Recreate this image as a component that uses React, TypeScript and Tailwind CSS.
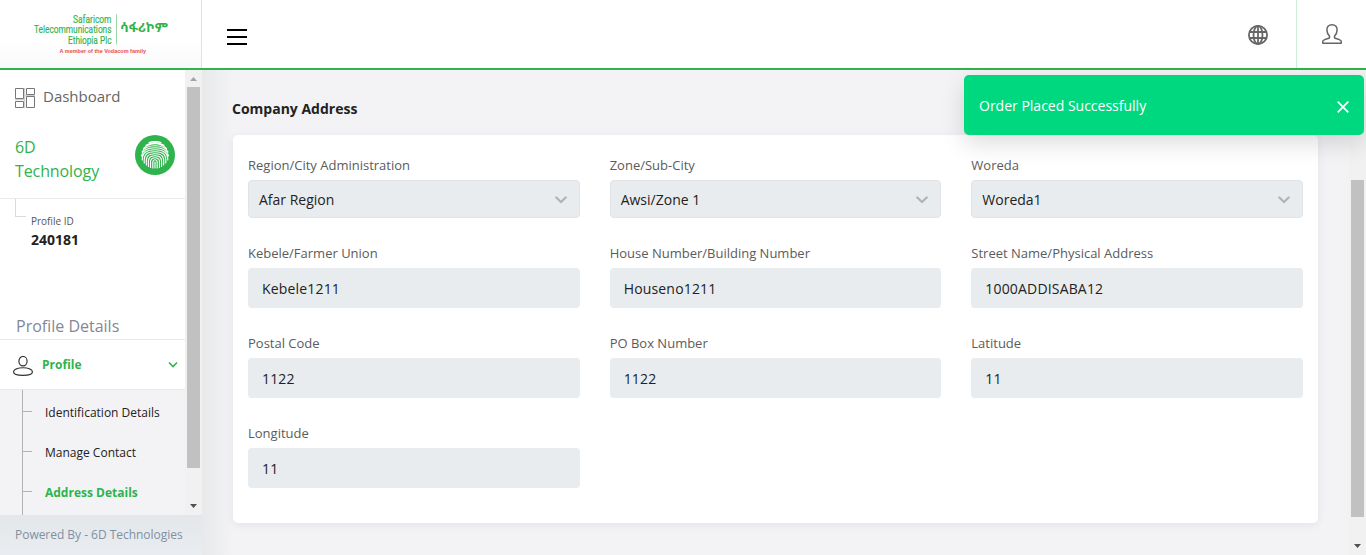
import React from "react";

type FieldProps = { label: string; value: string; select?: boolean };

const fields: FieldProps[] = [
  { label: "Region/City Administration", value: "Afar Region", select: true },
  { label: "Zone/Sub-City", value: "Awsi/Zone 1", select: true },
  { label: "Woreda", value: "Woreda1", select: true },
  { label: "Kebele/Farmer Union", value: "Kebele1211" },
  { label: "House Number/Building Number", value: "Houseno1211" },
  { label: "Street Name/Physical Address", value: "1000ADDISABA12" },
  { label: "Postal Code", value: "1122" },
  { label: "PO Box Number", value: "1122" },
  { label: "Latitude", value: "11" },
  { label: "Longitude", value: "11" },
];

function Logo() {
  return (
    <svg width="140" height="46" viewBox="0 0 140 46" className="ml-[32px] mt-[11px] block">
      <g fill="#2fb34c" fontFamily="Roboto" fontSize="10.500" fontWeight="400" stroke="#2fb34c" strokeWidth=".15">
        <text x="41" y="11.500" textLength="38.500" lengthAdjust="spacingAndGlyphs">Safaricom</text>
        <text x="2" y="22" textLength="77.500" lengthAdjust="spacingAndGlyphs">Telecommunications</text>
        <text x="36" y="32.500" textLength="43.500" lengthAdjust="spacingAndGlyphs">Ethiopia Plc</text>
      </g>
      <path d="M84.500 3V33.500" stroke="#9bd9a8" />
      <text x="88" y="20.500" fill="#2fb34c" fontFamily="'Noto Sans Ethiopic', 'Noto Sans', 'DejaVu Sans', sans-serif" fontSize="13" fontWeight="700" textLength="48" lengthAdjust="spacingAndGlyphs">ሳፋሪኮም</text>
      <text x="27.500" y="42" fill="#e94b50" fontFamily="'Liberation Sans'" fontSize="5.500" fontWeight="700" textLength="86.500">A member of the Vodacom family</text>
    </svg>
  );
}

function Header() {
  return (
    <header className="flex h-[70px] shrink-0 border-b-2 border-[#2fb34c] bg-white">
      <div className="w-[202px] border-r border-[#cfeed6] bg-linear-to-b from-white from-60% to-[#f9f9fa]">
        <Logo />
      </div>
      <div className="flex flex-1 items-start pl-[25px] pt-[29px]">
        <div className="flex w-5 flex-col gap-[5px]">
          <span className="h-[2px] bg-black" />
          <span className="h-[2px] bg-black" />
          <span className="h-[2px] bg-black" />
        </div>
      </div>
      <div className="w-12 pt-[25px]">
        <svg width="20" height="20" viewBox="0 0 20 20" fill="none" stroke="#666" strokeWidth="1.800" className="block">
          <circle cx="10" cy="10" r="9.100" />
          <ellipse cx="10" cy="10" rx="4.500" ry="9.100" />
          <path d="M10 1v18M2 7h16M2 13h16" />
        </svg>
      </div>
      <div className="w-[70px] border-l border-[#cfeed6] pl-[25px] pt-[24px]">
        <svg width="20" height="20" viewBox="0 0 20 20" fill="none" stroke="#666" strokeWidth="1.500" strokeLinejoin="round" className="block">
          <path d="M10 .8C6.500.8 4.700 3 4.900 6.100c.1 2.500 1.100 4.600 2.600 6v1.700C6.500 14.600.8 15.600.8 17.300v1.900h18.400v-1.900c0-1.700-5.700-2.700-6.700-3.500v-1.700c1.500-1.400 2.500-3.500 2.600-6C15.300 3 13.500.8 10 .8Z" />
        </svg>
      </div>
    </header>
  );
}

function Fingerprint() {
  return (
    <div className="flex size-10 items-center justify-center rounded-full bg-[#2fb34c]">
      <svg width="28" height="28" viewBox="0 0 28 28" fill="none" stroke="#fff" strokeWidth="1.150" strokeLinecap="round">
        <path d="M8 1.500Q14-.8 20 1.500M5 4.200Q14-1 23 4.200M2.600 7.500Q7 2.700 14 2.700T25.400 7.500M1 11Q4 4.700 14 4.700T27 11M.5 15Q2 6.700 14 6.700T27.500 15M1.200 19Q1 8.700 14 8.700T26.800 19M3.300 22C2.500 14 5 10.700 14 10.700S25.500 14 24.700 22M5.400 24C4.800 16 6 12.700 14 12.700S23.200 16 22.600 24M7.500 25.500C7 19 7 14.700 14 14.700S21 19 20.500 25.500M9.600 26.500C9.500 21 8.500 16.700 14 16.700S18.500 21 18.400 26.500M11.800 27C12 22 11 18.700 14 18.700S16 22 16.200 27M14 21v6" />
      </svg>
    </div>
  );
}

function Sidebar() {
  return (
    <aside className="flex w-[202px] shrink-0 flex-col">
      <div className="flex h-[445px]">
        <div className="flex w-[185px] flex-col bg-white">
          <div className="flex h-[55px] items-start pl-[15px] text-[#666]">
            <svg width="20" height="20" viewBox="0 0 20 20" fill="none" className="mt-[18px] block">
              <path d="M9.500 0v20M0 11.500h10M10 7.500h10" stroke="#cfcfcf" strokeWidth="1.500" />
              <path d="M.5.500h8v10h-8zM11.500.500h8v6h-8zM.5 13.500h8v6h-8zM11.500 8.500h8v11h-8z" stroke="#777" />
            </svg>
            <span className="ml-2 mt-[14px] text-[15px] leading-6">Dashboard</span>
          </div>
          <div className="flex h-[74px] shrink-0 justify-between border-b border-[#e8e9ec] pl-[15px] pr-[10px] pt-[10px]">
            <div className="w-[90px] text-base leading-6 tracking-[-0.1px] text-[#2fb34c]">6D Technology</div>
            <Fingerprint />
          </div>
          <div className="flex h-[115px] shrink-0 pl-[15px]">
            <div className="h-[18px] w-[11px] border-b border-l border-[#d9dadc]" />
            <div className="pl-[5px] pt-[14px]">
              <div className="text-[10px] leading-4 text-[#555]">Profile ID</div>
              <div className="mt-px text-sm leading-5 font-bold text-[#222]">240181</div>
            </div>
          </div>
          <div className="h-[26px] shrink-0 border-b border-[#e8e9ec] pl-4 text-base leading-6 text-[#858795]">Profile Details</div>
          <div className="flex h-[50px] shrink-0 items-center border-b border-[#e8e9ec] pl-[13px] pr-[7px]">
            <svg width="20" height="20" viewBox="0 0 20 20" fill="none" stroke="#333" strokeWidth="1.200" className="mt-[3px]">
              <ellipse cx="10" cy="5.200" rx="4.100" ry="4.700" />
              <path d="M6.200 12C3.100 12.700.6 14 .6 16c0 2.200 4 3.400 9.400 3.400s9.400-1.200 9.400-3.400c0-2-2.500-3.300-5.600-4-1.200-.3-6.400-.3-7.600 0Z" />
            </svg>
            <span className="ml-[9px] flex-1 text-xs font-bold text-[#2fb34c]">Profile</span>
            <svg width="10" height="8" viewBox="0 0 10 8" fill="none" stroke="#2fb34c" strokeWidth="1.600">
              <path d="M1 1.500l4 4 4-4" />
            </svg>
          </div>
          <div className="flex flex-1 bg-[#f3f3f6] pl-[22px]">
            <ul className="flex-1 border-l border-[#b2b2b4] pt-[2px]">
              {["Identification Details", "Manage Contact", "Address Details"].map((item) => (
                <li key={item} className="flex h-10 items-center">
                  <span className="-mt-px h-px w-[9px] bg-[#b2b2b4]" />
                  <span className={item === "Address Details" ? "ml-[13px] mt-[2px] text-xs font-bold text-[#2fb34c]" : "ml-[13px] mt-[2px] text-xs text-[#222]"}>{item}</span>
                </li>
              ))}
            </ul>
          </div>
        </div>
        <div className="flex w-[17px] flex-col items-center bg-[#f1f1f1]">
          <svg width="17" height="17" className="shrink-0"><path d="M5 11h7L8.500 7z" fill="#a3a3a3" /></svg>
          <div className="h-[381px] w-[13px] bg-[#c1c1c1]" />
          <svg width="17" height="17" className="mt-auto shrink-0"><path d="M5 6h7L8.500 10z" fill="#505050" /></svg>
        </div>
      </div>
      <div className="h-10 bg-linear-to-b from-[#e3e7ea] to-[#e9edf0] pl-[15px] text-xs leading-[39px] tracking-[-0.03px] text-[#7f90a4]">Powered By - 6D Technologies</div>
    </aside>
  );
}

function Field({ label, value, select }: FieldProps) {
  return (
    <div>
      <div className="mb-[5px] h-5 text-[13px] leading-5 text-[#5b5b5b]">{label}</div>
      {select ? (
        <div className="flex h-[38px] items-center justify-between rounded-[4px] border border-[#e1e3e6] bg-[#e9ecef] pl-[10px] pr-3 text-sm text-[#222]">
          <span className="pt-[2px]">{value}</span>
          <svg width="12" height="8" viewBox="0 0 12 8" fill="none" stroke="#b3b3b3" strokeWidth="2.300" strokeLinecap="round" className="mt-px">
            <path d="M1.300 1.500L6 6l4.700-4.500" />
          </svg>
        </div>
      ) : (
        <div className="flex h-10 items-center rounded-[4px] bg-[#e8ecef] pl-[14px] pt-px text-sm tracking-[0.17px] text-[#222]">{value}</div>
      )}
    </div>
  );
}

export default function App() {
  return (
    <div className="relative flex h-[555px] w-[1366px] flex-col overflow-hidden bg-[#f3f3f6] font-['Open_Sans',sans-serif]">
      <Header />
      <div className="flex flex-1">
        <Sidebar />
        <main className="flex-1 bg-linear-to-r from-[#e8e9eb] to-[#f3f3f6] to-[32px] pl-[31px] pr-[31px] pt-[29px]">
          <h1 className="-ml-px mb-4 h-5 text-sm leading-5 font-bold text-[#222]">Company Address</h1>
          <section className="grid h-[388px] grid-cols-3 content-start gap-x-[30px] gap-y-[25px] rounded-[5px] bg-white px-[15px] pt-5 shadow-[0_2px_8px_rgba(60,70,90,0.08)]">
            {fields.map((field) => (
              <Field key={field.label} {...field} />
            ))}
          </section>
        </main>
        <div className="flex w-[17px] flex-col items-center bg-[#f1f1f1] pt-[110px]">
          <div className="h-[337px] w-[13px] bg-[#c1c1c1]" />
          <svg width="17" height="17" className="mt-auto shrink-0"><path d="M5 6h7L8.500 10z" fill="#505050" /></svg>
        </div>
      </div>
      <div className="absolute left-[964px] top-[75px] flex h-[60px] w-[400px] items-center justify-between rounded-[5px] bg-[#00d880] pl-[15px] pr-[15px] text-sm text-white shadow-[0_8px_24px_rgba(0,0,0,0.14)]">
        <span className="pt-[2px]">Order Placed Successfully</span>
        <svg width="12" height="12" viewBox="0 0 12 12" stroke="#fff" strokeWidth="1.700" className="mt-1">
          <path d="M.7.700l10.600 10.600M11.300.7L.7 11.300" />
        </svg>
      </div>
    </div>
  );
}
